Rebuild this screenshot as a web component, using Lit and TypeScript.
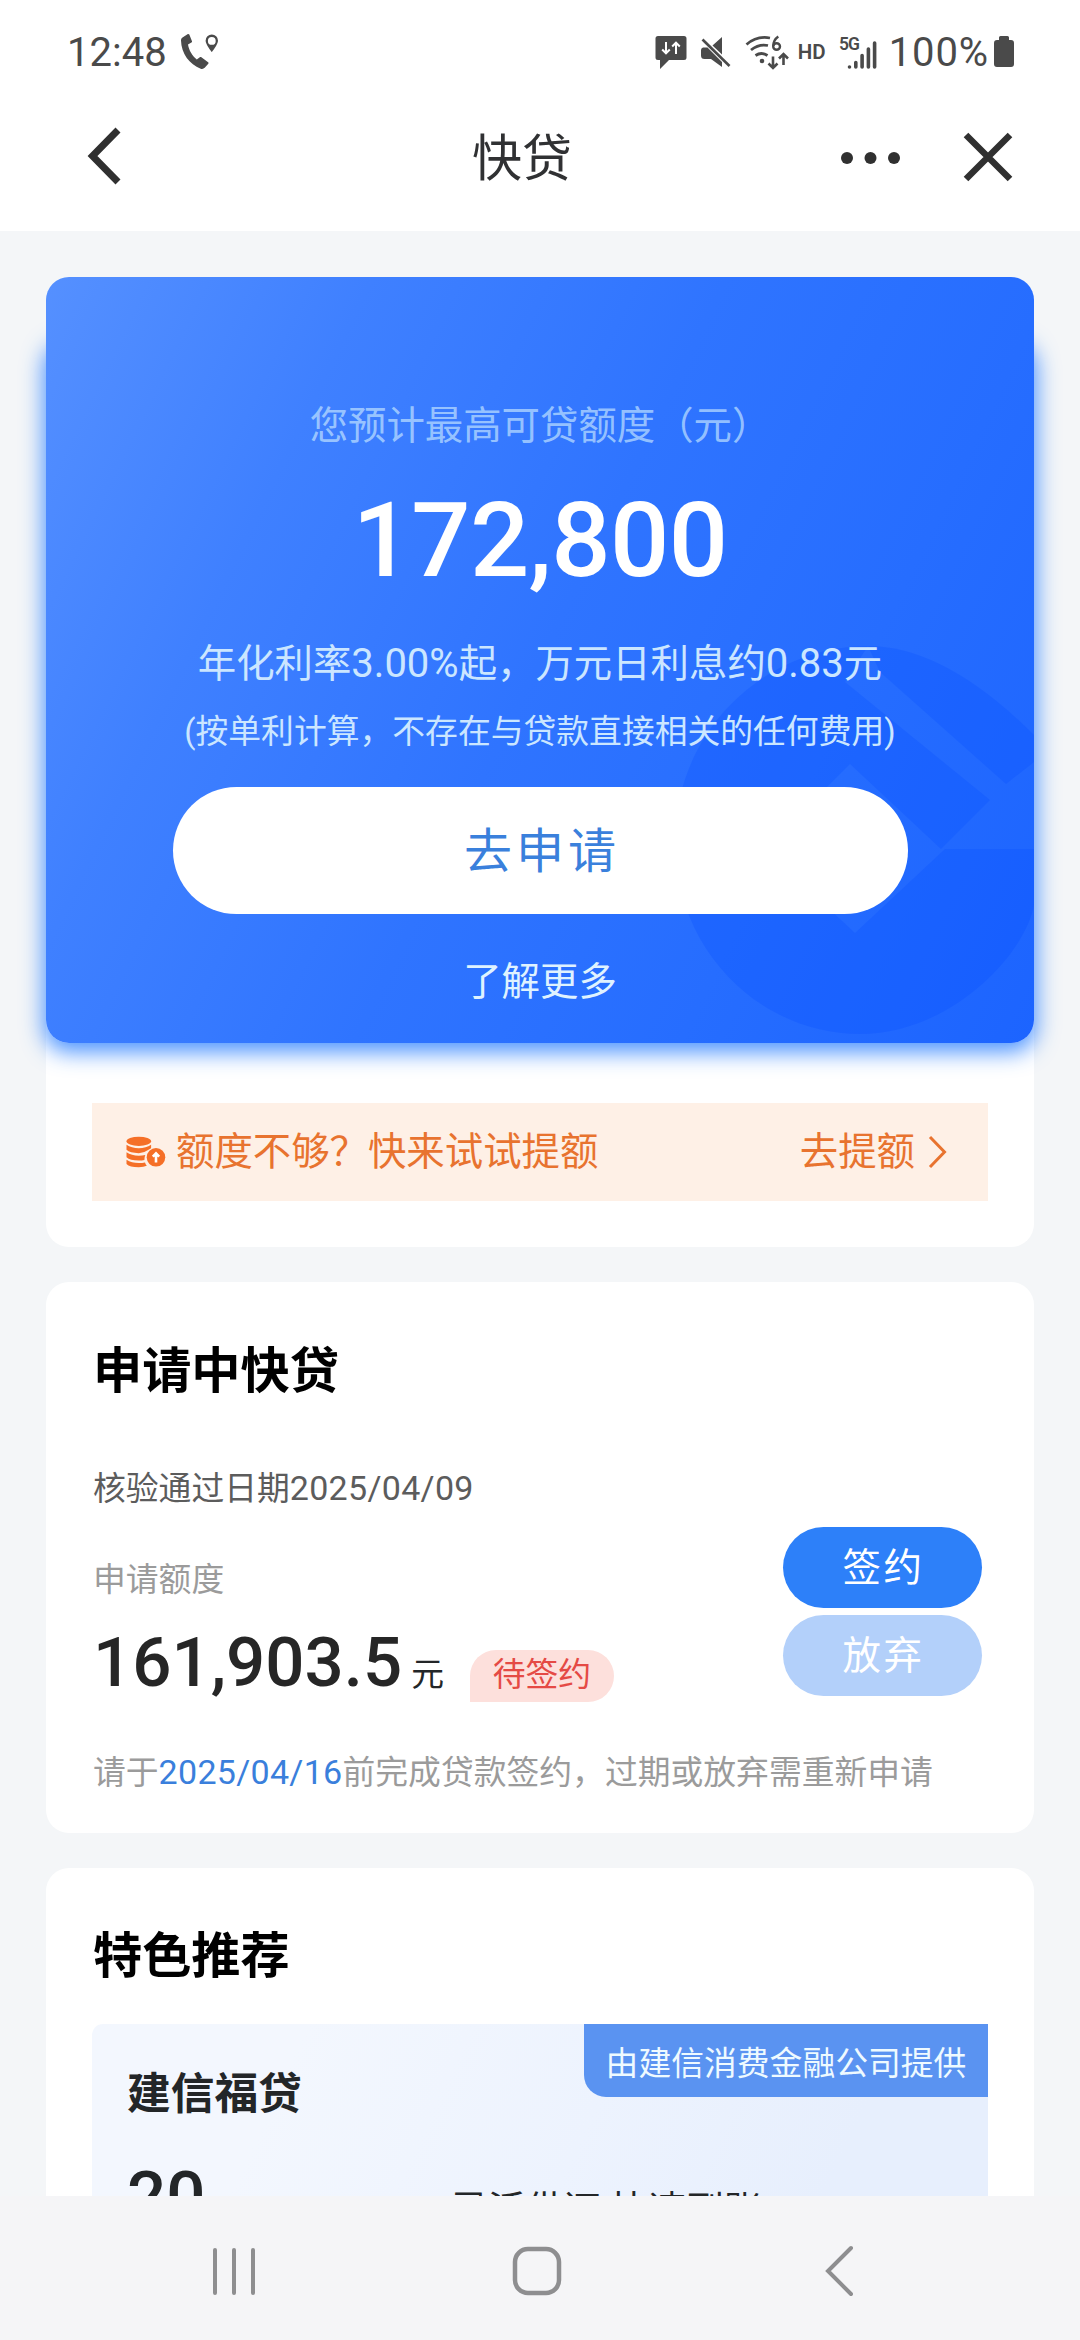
import { LitElement, html, css } from "lit";
import { customElement } from "lit/decorators.js";

const INK = "#4a4a4a";

const callIcon = html`<svg width="40" height="40" viewBox="0 0 40 40">
  <path fill=${INK} d="M2.5 5.5 7.500 2.200c.8-.5 1.500-.2 1.800.4L11.900 8.900c.3.6.1 1.300-.5 1.600L8 12.500c1 6 4.300 11.300 8.800 15l3-2.200c.5-.4 1.100-.4 1.600 0l6.700 4.900c.5.4.6 1 .2 1.500l-3.600 4.100c-1 1.100-2.500 1.400-4 .9C9.500 32.500 1.300 21.500 1 8.500c0-1.300.5-2.400 1.500-3z"/>
  <path fill=${INK} fill-rule="evenodd" d="M31.800 2.500a6.200 6.200 0 0 1 6.200 6.200c0 3.800-6.200 11.300-6.200 11.300s-6.200-7.500-6.200-11.300a6.200 6.200 0 0 1 6.200-6.200zm0 2.500a3.900 3.900 0 1 0 0 7.800 3.900 3.900 0 0 0 0-7.800z"/>
</svg>`;

const messageIcon = html`<svg width="32" height="34" viewBox="0 0 32 34">
  <path fill=${INK} d="M3 1h26a2.500 2.500 0 0 1 2.500 2.500v19A2.500 2.500 0 0 1 29 25H14l-9 9v-9H3a2.500 2.500 0 0 1-2.500-2.500v-19A2.500 2.500 0 0 1 3 1z"/>
  <path fill="none" stroke="#fff" stroke-width="2" d="M11 7v11M7.200 14.500 11 18.300l3.800-3.800M21 19V8M17.200 11.500 21 7.700l3.800 3.800"/>
</svg>`;

const muteIcon = html`<svg width="31" height="34" viewBox="0 0 31 34">
  <path fill=${INK} d="M12.500 10.500 22 2v17.500zM3 12.500h4.500L22 27v5L11 24H4.500A3.500 3.500 0 0 1 1 20.500V15q0-2 2-2.500z"/>
  <path stroke=${INK} stroke-width="2.600" d="M2.500 4.500 29.500 31"/>
</svg>`;

const wifiIcon = html`<svg width="44" height="36" viewBox="0 0 44 36">
  <g fill="none" stroke=${INK} stroke-width="2.800">
    <path d="M1.500 10.500Q12 1.500 25 4M6 16q8-6.500 17-4.500M10.500 21.500q6-4 12 0"/>
    <path stroke-width="2.600" d="M28 22.500v11M23.500 29.500l4.500 4.500 4.500-4.500M38.500 31V20.500M34 24.500l4.500-4.500 4.500 4.500"/>
    <ellipse cx="31.600" cy="12.500" rx="3.400" ry="3.200" stroke-width="2.400"/>
    <path stroke-width="2.400" d="M28.300 12q0-6 5-9.500"/>
  </g>
  <circle cx="17" cy="27" r="2.300" fill=${INK}/>
</svg>`;

const signalIcon = html`<svg width="40" height="36" viewBox="0 0 40 36">
  <text x="0" y="15.500" font-family="Roboto, sans-serif" font-weight="600" font-size="17.500" textLength="21" fill=${INK}>5G</text>
  <g stroke=${INK} stroke-width="3.600" stroke-linecap="round">
    <path d="M10.500 33v.01M16.800 28.500V33M23.100 21.500V33M29.400 15V33M35.600 9V33"/>
  </g>
</svg>`;

const batteryIcon = html`<svg width="22" height="32" viewBox="0 0 22 32">
  <path fill=${INK} d="M7.500 0h7a1.500 1.500 0 0 1 1.500 1.500V4h2a3 3 0 0 1 3 3v21a3 3 0 0 1-3 3H4a3 3 0 0 1-3-3V7a3 3 0 0 1 3-3h2V1.500A1.500 1.500 0 0 1 7.500 0z"/>
</svg>`;

const coinsIcon = html`<svg width="40" height="32" viewBox="0 0 40 32">
  <g fill="#f56f27">
    <ellipse cx="12.800" cy="5.300" rx="12.300" ry="4.600"/>
    <path d="M.5 8.800q5 3.400 12.300 3.400t12.300-3.400v3.400l-3 1.800q-3.600 2.800-9.300 3.200Q4 17 .5 13.800zM.5 16.300q5 3.400 12.300 3.400 3.300 0 6.500-.7-.9 2-.9 5-2.500.6-5.600.6Q4 24.600.5 21.300zM.5 23.700q5 3.300 12.300 3.300 3.600 0 6.200-.6.500 1.800 1.800 3.400-3 1.400-8 1.400Q3.500 31.200.5 28z"/>
    <circle cx="30" cy="21.300" r="9.300"/>
  </g>
  <path fill="none" stroke="#fff" stroke-width="2.600" d="M30 26.500v-9M26.800 20.600 30 17.300l3.200 3.300"/>
</svg>`;

@customElement("app-root")
export class AppRoot extends LitElement {
  static styles = css`
    :host {
      display: block;
      font-family: Roboto, "Noto Sans CJK SC", sans-serif;
      font-size: 32.8px;
      color: #232628;
    }
    * { box-sizing: border-box; }
    svg { display: block; flex: none; }
    .screen {
      width: 1080px;
      height: 2340px;
      display: flex;
      flex-direction: column;
      overflow: hidden;
      background: #f4f6f8;
    }
    .top { background: #fff; height: 231px; flex: none; }
    .status {
      height: 104px;
      display: flex;
      align-items: center;
      justify-content: space-between;
      padding: 0 65px 0 67px;
      color: #4a4a4a;
      font-size: 40px;
      font-weight: 400;
    }
    .side { display: flex; align-items: center; }
    .left { gap: 13px; }
    .hd { font-size: 20.5px; font-weight: 600; line-height: 20px; margin-right: 13px; }
    .msg { margin-right: 13px; }
    .mute { margin-right: 14px; }
    .wifi { margin-right: 9px; }
    .signal { margin-right: 10px; }
    .percent { margin-right: 4px; letter-spacing: .9px; }
    .title-bar {
      height: 127px;
      display: grid;
      grid-template-columns: 388px auto 1fr;
      align-items: center;
      padding: 0 66px 18px 84px;
    }
    .back { margin-top: -7px; }
    .title { font-size: 50px; line-height: 60px; color: #303133; }
    .actions { display: flex; justify-content: flex-end; align-items: center; gap: 59px; margin-top: -6px; }

    .content {
      flex: 1;
      min-height: 0;
      overflow: hidden;
      padding: 46px 46px 0;
      display: flex;
      flex-direction: column;
      gap: 35px;
    }
    .card { background: #fff; border-radius: 23px; flex: none; }
    .quota { height: 970px; }
    .hero {
      position: relative;
      height: 766px;
      border-radius: 23px;
    }
    .glow {
      position: absolute;
      inset: 60px 0 0 0;
      border-radius: 23px;
      box-shadow: 0 7px 22px 2px rgba(30, 120, 255, .8);
    }
    .face {
      position: relative;
      height: 100%;
      border-radius: 23px;
      overflow: hidden;
      background: linear-gradient(116deg, #5590ff 0%, #3f80ff 24%, #2f74ff 50%, #266dff 74%, #1c64ff 100%);
    }
    .mark { position: absolute; inset: 0; }
    .hero-body {
      position: relative;
      height: 100%;
      display: flex;
      flex-direction: column;
      align-items: center;
      color: #fff;
      white-space: nowrap;
      font-size: 38.4px;
      padding-top: 123px;
    }
    .hint { line-height: 52px; color: rgba(200, 232, 255, .68); }
    .amount { margin-top: 26px; line-height: 124px; font-size: 104.4px; font-weight: 500; letter-spacing: -.6px; }
    .rate { margin-top: 36px; line-height: 52px; color: #cbe6ff; }
    .rate span { font-size: 40px; }
    .checked span, .deadline b { font-size: 34px; letter-spacing: .3px; }
    .note { margin-top: 20px; line-height: 44px; font-size: 32.8px; color: #cbe6ff; }
    .apply {
      margin-top: 33px;
      width: 735px;
      height: 127px;
      border-radius: 64px;
      background: #fff;
      color: #3a80dc;
      font-size: 48px;
      letter-spacing: 4px;
      display: flex;
      align-items: center;
      justify-content: center;
      padding-left: 4px;
      padding-bottom: 8px;
    }
    .more { margin-top: 42px; line-height: 52px; color: #dff2ff; }
    .raise {
      margin: 60px 46px 0;
      height: 98px;
      background: #fef0e6;
      color: #e8732f;
      font-size: 38.4px;
      display: flex;
      align-items: center;
      padding: 0 40px 0 34px;
      line-height: 52px;
    }
    .raise .grow { flex: 1; margin-left: 10px; }
    .raise .arrow { margin-left: 13px; }

    .pending { height: 551px; padding: 59px 46px 0 47px; }
    h2 { margin: 0; font-size: 49.2px; line-height: 60px; font-weight: 700; color: #000; }
    .checked { margin-top: 65px; line-height: 44px; color: #5c5c5c; }
    .row { display: flex; justify-content: space-between; }
    .label { margin-top: 47px; line-height: 44px; color: #9b9b9b; }
    .sum { display: flex; align-items: baseline; margin-top: 21px; }
    .num { font-size: 69px; line-height: 80px; font-weight: 500; color: #262626; }
    .unit { margin-left: 9px; }
    .tag {
      margin-left: 26px;
      width: 144px;
      height: 52px;
      line-height: 50px;
      text-align: center;
      border-radius: 26px 26px 26px 0;
      background: #fde0dc;
      color: #e54a45;
    }
    .buttons { display: flex; flex-direction: column; gap: 7px; padding: 16px 6px 0 0; }
    .btn {
      width: 199px;
      height: 81px;
      border-radius: 41px;
      display: flex;
      align-items: center;
      justify-content: center;
      color: #fff;
      font-size: 38.4px;
      letter-spacing: 2.600px;
      padding-left: 2px;
      padding-bottom: 8px;
      background: #2d80f9;
    }
    .pale { background: #b3d0fa; }
    .deadline { margin-top: 47px; line-height: 44px; color: #9b9b9b; white-space: nowrap; }
    .deadline b { font-weight: 400; color: #3a7fdc; }

    .featured { height: 520px; padding: 58px 46px 0; }
    .featured h2 { padding-left: 1px; }
    .offer {
      margin-top: 38px;
      height: 400px;
      border-radius: 11px 0 0 0;
      background: linear-gradient(115deg, #f3f7fe 20%, #edf3fe 50%, #e7effd 75%);
      overflow: hidden;
    }
    .offer-head { display: flex; justify-content: space-between; align-items: flex-start; padding-left: 35px; }
    .offer-name { font-size: 43.7px; line-height: 52px; font-weight: 700; padding-top: 44px; }
    .provider {
      width: 404px;
      height: 73px;
      line-height: 80px;
      text-align: center;
      color: #eefaff;
      background: #5a93f1;
      border-radius: 0 0 0 22px;
    }
    .offer-row { display: flex; align-items: flex-start; padding: 37px 0 0 35px; }
    .offer-num { width: 323px; font-size: 69px; line-height: 80px; font-weight: 500; }
    .offer-desc { margin-top: 25px; font-size: 37.8px; line-height: 56px; white-space: nowrap; }

    .nav {
      flex: none;
      height: 144px;
      background: #f5f5f7;
      display: flex;
      justify-content: space-between;
      align-items: center;
      padding: 6px 225px 0 210px;
    }
    .home { margin-right: 10px; }
  `;

  render() {
    return html`
      <div class="screen">
        <header class="top">
          <div class="status">
            <div class="side left"><span>12:48</span>${callIcon}</div>
            <div class="side">
              <span class="msg">${messageIcon}</span>
              <span class="mute">${muteIcon}</span>
              <span class="wifi">${wifiIcon}</span>
              <span class="hd">HD</span>
              <span class="signal">${signalIcon}</span>
              <span class="percent">100%</span>
              ${batteryIcon}
            </div>
          </div>
          <div class="title-bar">
            <svg class="back" width="40" height="60" viewBox="0 0 40 60">
              <path fill="none" stroke="#303030" stroke-width="7" d="M34 5 8.500 31 34 57"/>
            </svg>
            <div class="title">快贷</div>
            <div class="actions">
              <svg width="64" height="16" viewBox="0 0 64 16" fill="#303030">
                <circle cx="8" cy="10" r="6"/><circle cx="31.500" cy="10" r="6"/><circle cx="55" cy="10" r="6"/>
              </svg>
              <svg width="52" height="52" viewBox="0 0 52 52">
                <path stroke="#303030" stroke-width="6.500" d="M4 5 48 49M48 5 4 49"/>
              </svg>
            </div>
          </div>
        </header>

        <main class="content">
          <section class="card quota">
            <div class="hero">
              <div class="glow"></div>
              <div class="face">
                <svg class="mark" width="988" height="766" viewBox="46 277 988 766">
                  <path fill="#0048ff" fill-opacity=".22" fill-rule="evenodd"
                    d="M868 646C768 646 675 728 675 842C675 950 760 1034 860 1034C950 1034 1025 955 1034 905V849H945L855 933L765 849L850 764L941 849L990 800L845 682Z"/>
                  <path fill="#0048ff" fill-opacity=".22" d="M868 646Q945 646 1034 735V762L1006 784L880 672Z"/>
                </svg>
                <div class="hero-body">
                  <div class="hint">您预计最高可贷额度（元）</div>
                  <div class="amount">172,800</div>
                  <div class="rate">年化利率<span>3.00%</span>起，万元日利息约<span>0.83</span>元</div>
                  <div class="note">(按单利计算，不存在与贷款直接相关的任何费用)</div>
                  <div class="apply">去申请</div>
                  <div class="more">了解更多</div>
                </div>
              </div>
            </div>
            <div class="raise">
              ${coinsIcon}
              <span class="grow">额度不够？快来试试提额</span>
              <span>去提额</span>
              <svg class="arrow" width="20" height="34" viewBox="0 0 20 34">
                <path fill="none" stroke="#e8732f" stroke-width="3" d="M2 2 16.500 17 2 32"/>
              </svg>
            </div>
          </section>

          <section class="card pending">
            <h2>申请中快贷</h2>
            <div class="checked">核验通过日期<span>2025/04/09</span></div>
            <div class="row">
              <div>
                <div class="label">申请额度</div>
                <div class="sum">
                  <span class="num">161,903.5</span><span class="unit">元</span><span class="tag">待签约</span>
                </div>
              </div>
              <div class="buttons">
                <div class="btn">签约</div>
                <div class="btn pale">放弃</div>
              </div>
            </div>
            <div class="deadline">请于<b>2025/04/16</b>前完成贷款签约，过期或放弃需重新申请</div>
          </section>

          <section class="card featured">
            <h2>特色推荐</h2>
            <div class="offer">
              <div class="offer-head">
                <div class="offer-name">建信福贷</div>
                <div class="provider">由建信消费金融公司提供</div>
              </div>
              <div class="offer-row">
                <span class="offer-num">20</span>
                <span class="offer-desc">灵活借还 快速到账</span>
              </div>
            </div>
          </section>
        </main>

        <nav class="nav">
          <svg width="48" height="50" viewBox="0 0 48 50">
            <path stroke="#8e8e90" stroke-width="4" stroke-linecap="round" d="M5 4v43M24 4v43M43 4v43"/>
          </svg>
          <svg class="home" width="50" height="50" viewBox="0 0 50 50">
            <rect x="3" y="3" width="44" height="44" rx="13" fill="none" stroke="#8e8e90" stroke-width="4.500"/>
          </svg>
          <svg width="30" height="52" viewBox="0 0 30 52">
            <path fill="none" stroke="#8e8e90" stroke-width="4" stroke-linecap="round" d="M26 3 3 26 26 49"/>
          </svg>
        </nav>
      </div>
    `;
  }
}
